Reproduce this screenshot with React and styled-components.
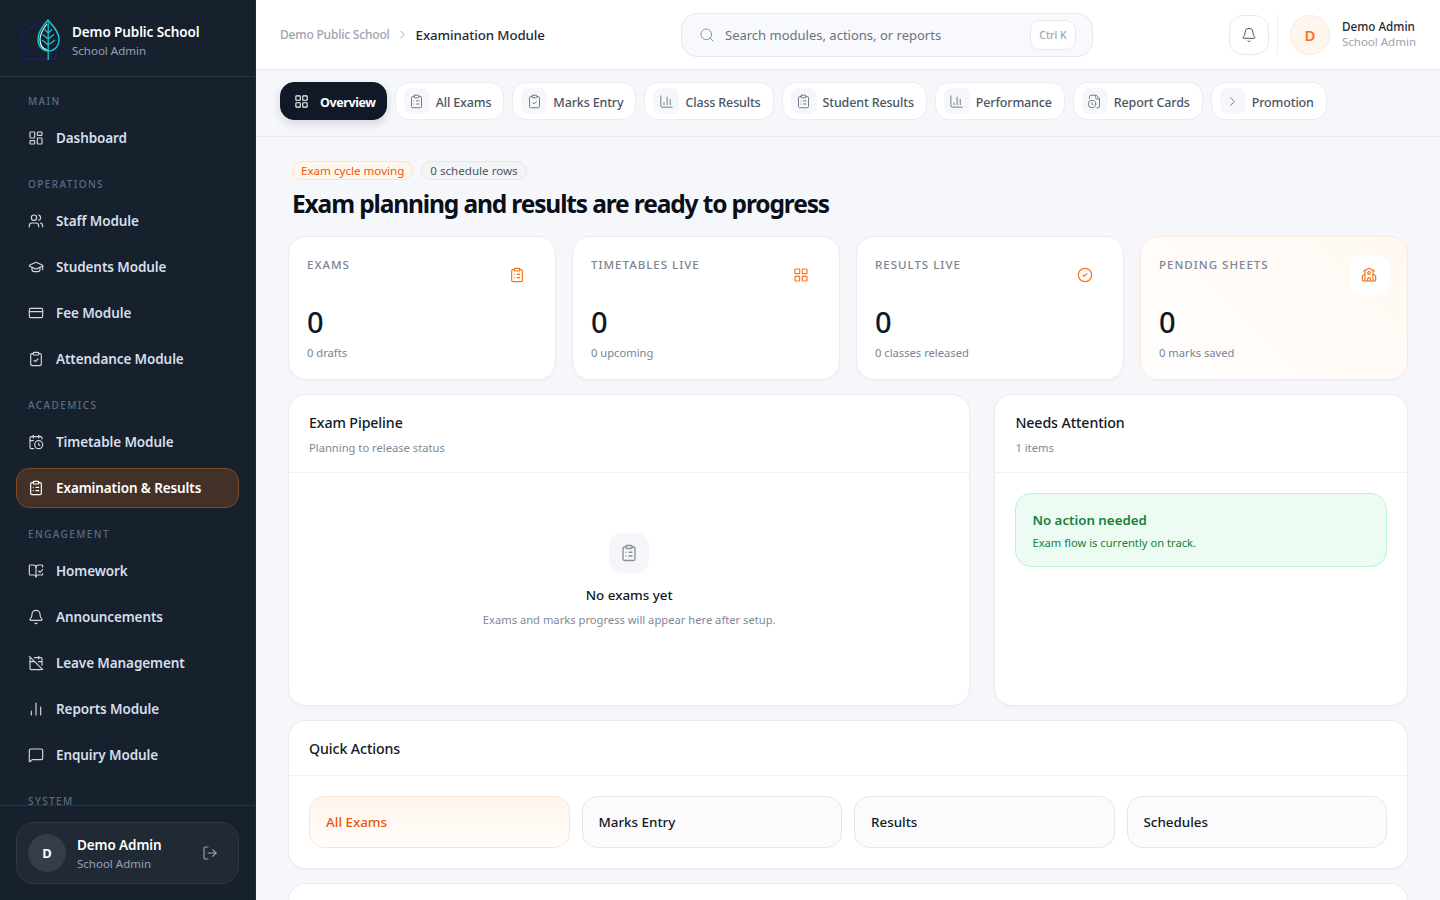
import React from 'react';
import styled, { createGlobalStyle } from 'styled-components';
import {
  LayoutDashboard, LayoutGrid, Users, GraduationCap, CreditCard, ClipboardCheck, CalendarClock, ClipboardList,
  BookOpenCheck, Bell, CalendarOff, ChartNoAxesColumn, MessageSquare, LogOut, ChevronRight, Search, ChartColumn,
  FileClock, CircleCheck, School,
} from 'lucide-react';

const Global = createGlobalStyle`
  html, body { margin: 0; padding: 0; height: 100%; overflow: hidden; }
  body { font-family: "Noto Sans", "Open Sans", sans-serif; background: #f5f7fb; color: #111827; }
  * { box-sizing: border-box; }
`;

const Shell = styled.div`display: flex; height: 100vh; overflow: hidden;`;

const Sidebar = styled.aside`
  width: 256px; flex: none; display: flex; flex-direction: column; height: 100%;
  background: #17212d; border-right: 1px solid #1f2a37;
`;
const Brand = styled.div`
  height: 77px; flex: none; display: flex; align-items: center; gap: 8px; padding: 6px 16px 0 20px;
  border-bottom: 1px solid #2a3441;
`;
const BrandText = styled.div`display: flex; flex-direction: column; gap: 2px;`;
const BrandName = styled.div`font-size: 13.5px; font-weight: 600; color: #fff; line-height: 18px; letter-spacing: -0.1px;`;
const BrandRole = styled.div`font-size: 11.5px; color: #94a3b8; line-height: 16px;`;

const Nav = styled.nav`flex: 1; min-height: 0; overflow: hidden; padding: 16px 16px 0;`;
const SectionLabel = styled.div`
  font-size: 10px; line-height: 16px; letter-spacing: 1.4px; color: #5a6b82; font-weight: 500;
  padding-left: 12px; margin: 18px 0 9px; text-transform: uppercase;
  &:first-child { margin-top: 0; margin-bottom: 9px; }
`;
const NavItem = styled.div`
  height: 40px; display: flex; align-items: center; gap: 12px; padding: 0 11px;
  margin-bottom: 6px; border-radius: 13px; font-size: 13.5px; font-weight: 600; letter-spacing: -0.1px;
  color: ${p => (p.$active ? '#fff' : '#d5deea')};
  background: ${p => (p.$active ? '#433128' : 'transparent')};
  border: 1px solid ${p => (p.$active ? '#7c4a24' : 'transparent')};
  svg { flex: none; color: ${p => (p.$active ? '#fff' : '#cdd6e2')}; }
`;

const SideFooter = styled.div`flex: none; padding: 16px; border-top: 1px solid #2a3441;`;
const UserCard = styled.div`
  height: 62px; display: flex; align-items: center; gap: 11px; padding: 0 11px;
  border-radius: 18px; background: #212934; border: 1px solid #2e3744;
`;
const UserAvatar = styled.div`
  width: 38px; height: 38px; flex: none; border-radius: 50%; background: #343d49; color: #fff;
  display: flex; align-items: center; justify-content: center; font-size: 13px; font-weight: 700;
`;
const UserText = styled.div`flex: 1; min-width: 0; padding-top: 3px;`;
const UserName = styled.div`font-size: 13.5px; font-weight: 600; line-height: 18px; color: #fff; letter-spacing: -0.1px;`;
const UserRole = styled.div`font-size: 11.5px; line-height: 18px; margin-top: 1px; color: #94a3b8;`;
const LogoutIcon = styled.div`display: flex; color: #94a3b8; margin-right: 9px;`;

const Main = styled.main`flex: 1; min-width: 0; height: 100%; overflow: hidden; display: flex; flex-direction: column;`;
const TopBar = styled.header`
  height: 70px; flex: none; background: #fff; border-bottom: 1px solid #e7eaf0;
  display: flex; align-items: center; padding: 0 24px;
`;
const Crumbs = styled.div`display: flex; align-items: center; gap: 6px; width: 401px; flex: none;`;
const CrumbRoot = styled.span`font-size: 12px; font-weight: 500; color: #9ca3af; letter-spacing: -0.2px;`;
const CrumbCurrent = styled.span`font-size: 13.3px; font-weight: 500; color: #1f2937; margin-left: 1px; letter-spacing: -0.1px;`;
const SearchBox = styled.div`
  width: 412px; height: 44px; flex: none; display: flex; align-items: center; gap: 10px;
  padding: 0 16px 0 17px; border-radius: 16px; background: #f8f9fc; border: 1px solid #e5e8ef; color: #8b93a1;
`;
const SearchText = styled.span`flex: 1; font-size: 13px; color: #6b7280;`;
const Kbd = styled.span`
  width: 46px; height: 30px; margin-right: 0; border-radius: 10px; border: 1px solid #e6e9ef; background: #fff;
  display: flex; align-items: center; justify-content: center; font-size: 10.5px; font-weight: 500; color: #9ca3af;
`;
const TopRight = styled.div`margin-left: auto; display: flex; align-items: center;`;
const BellBtn = styled.div`
  width: 40px; height: 40px; border-radius: 14px; background: #fff; border: 1px solid #e7eaf0;
  display: flex; align-items: center; justify-content: center; color: #4b5563;
`;
const VDivider = styled.div`width: 1px; height: 40px; background: #eef0f4; margin: 0 12px 0 8px;`;
const TopAvatar = styled.div`
  width: 40px; height: 40px; border-radius: 50%; background: #fff6ee; border: 1px solid #f0ece8; color: #f97316;
  display: flex; align-items: center; justify-content: center; font-size: 15px; font-weight: 600;
`;
const TopUser = styled.div`margin-left: 12px;`;
const TopName = styled.div`font-size: 11.7px; font-weight: 500; line-height: 15px; color: #1f2937;`;
const TopRole = styled.div`font-size: 11.5px; line-height: 16px; color: #9ca3af;`;

const TabBar = styled.div`
  height: 67px; flex: none; display: flex; align-items: flex-start; gap: 8px; padding: 12px 24px 0;
  border-bottom: 1px solid #e9ecf2; background: #f5f7fb;
`;
const Tab = styled.div`
  height: 38px; display: flex; align-items: center; gap: 6px; padding: ${p => (p.$active ? '0 10px 0 10px' : '0 12px 0 8px')};
  border-radius: 14px; font-size: 12.5px; font-weight: ${p => (p.$active ? 700 : 500)};
  letter-spacing: ${p => (p.$active ? '-0.4px' : '-0.15px')};
  color: ${p => (p.$active ? '#fff' : '#4b5563')};
  background: ${p => (p.$active ? '#111827' : '#fff')};
  border: 1px solid ${p => (p.$active ? '#111827' : '#e9ecf2')};
  box-shadow: ${p => (p.$active ? '0 4px 10px rgba(17,24,39,.14)' : 'none')};
`;
const TabIcon = styled.span`
  width: ${p => (p.$active ? '20px' : '26px')}; height: 26px; border-radius: 8px; display: flex; align-items: center; justify-content: center;
  color: ${p => (p.$active ? '#fff' : '#6b7280')}; background: ${p => (p.$active ? 'transparent' : '#f6f7fb')};
  margin-right: ${p => (p.$active ? '3px' : '0')};
`;
const TabLabel = styled.span`margin-top: 2px;`;

const Content = styled.div`flex: 1; min-height: 0; overflow: hidden; padding: 24px 32px; display: flex; flex-direction: column; gap: 14px;`;
const Hero = styled.div`padding-left: 4px;`;
const Badges = styled.div`display: flex; gap: 8px;`;
const Badge = styled.span`
  height: 19px; padding: 0 8px; border-radius: 10px; display: flex; align-items: center; font-size: 11.6px;
  color: ${p => (p.$warm ? '#ea580c' : '#4b5563')};
  background: ${p => (p.$warm ? '#fff6ee' : '#f3f4f6')};
  border: 1px solid ${p => (p.$warm ? '#fde3cf' : '#e5e7eb')};
`;
const Title = styled.h1`margin: 6px 0 0; font-size: 24.5px; line-height: 36px; font-weight: 700; color: #0b0f19; letter-spacing: -1.13px;`;

const Stats = styled.div`display: grid; grid-template-columns: repeat(4, 1fr); gap: 16px; flex: none;`;
const Stat = styled.div`
  height: 144px; border-radius: 18px; padding: 18px; position: relative;
  border: 1px solid ${p => (p.$warm ? '#fde9da' : '#e9ecf2')};
  background: ${p => (p.$warm ? 'linear-gradient(45deg, #fffefd 0%, #fff8f2 100%)' : '#fff')};
  box-shadow: 0 1px 3px rgba(17,24,39,.03);
`;
const StatHead = styled.div`display: flex; justify-content: space-between; align-items: flex-start; height: 40px;`;
const StatLabel = styled.div`font-size: 11.5px; line-height: 19px; font-weight: 500; letter-spacing: 1px; color: #7a8494; text-transform: uppercase;`;
const StatIcon = styled.div`
  width: 40px; height: 40px; border-radius: 13px; display: flex; align-items: center; justify-content: center;
  color: #f97316; background: ${p => (p.$warm ? '#fff' : 'transparent')};
`;
const StatValue = styled.div`font-size: 29px; line-height: 40px; font-weight: 500; color: #0f172a; margin-top: 7px;`;
const StatNote = styled.div`font-size: 11.2px; line-height: 18px; color: #7a8494; margin-top: 2px;`;

const Columns = styled.div`display: grid; grid-template-columns: 1.65fr 1fr; gap: 24px; flex: none;`;
const Panel = styled.section`
  background: #fff; border-radius: 18px; border: 1px solid #e9ecf2; box-shadow: 0 1px 3px rgba(17,24,39,.03);
  height: ${p => p.$h}; flex: none; overflow: hidden;
`;
const PanelHead = styled.div`padding: 17px 20px 0; border-bottom: 1px solid #eef0f4; height: ${p => p.$h || '78px'};`;
const PanelTitle = styled.div`font-size: 14.2px; line-height: 22px; font-weight: 500; color: #111827; letter-spacing: -0.1px;`;
const PanelSub = styled.div`font-size: 11.2px; line-height: 18px; color: #7f8896; margin-top: 5px;`;
const Empty = styled.div`display: flex; flex-direction: column; align-items: center; padding-top: 60px;`;
const EmptyIcon = styled.div`
  width: 40px; height: 40px; border-radius: 13px; background: #f5f6fa; color: #8b8f98;
  display: flex; align-items: center; justify-content: center;
`;
const EmptyTitle = styled.div`font-size: 13.4px; font-weight: 500; color: #111827; line-height: 20px; margin-top: 12px;`;
const EmptyText = styled.div`font-size: 11.2px; line-height: 18px; color: #7f8896; margin-top: 6px;`;
const PanelBody = styled.div`padding: 20px;`;
const Notice = styled.div`
  height: 74px; border-radius: 16px; background: #edfcf3; border: 1px solid #bbf2d0; padding: 16px 16px;
`;
const NoticeTitle = styled.div`font-size: 13.3px; font-weight: 600; line-height: 20px; color: #15803d;`;
const NoticeText = styled.div`font-size: 11.2px; line-height: 18px; color: #15803d; margin-top: 4px;`;
const Actions = styled.div`display: grid; grid-template-columns: repeat(4, 1fr); gap: 12px; padding: 20px;`;
const Action = styled.div`
  height: 52px; border-radius: 15px; padding: 0 16px; display: flex; align-items: center; font-size: 13.4px; font-weight: 500;
  color: ${p => (p.$warm ? '#ea580c' : '#111827')};
  background: ${p => (p.$warm ? 'linear-gradient(180deg, #fff5ec 0%, #fffdfb 100%)' : '#fbfbfc')};
  border: 1px solid ${p => (p.$warm ? '#fde3cf' : '#e5e7eb')};
`;

const Logo = () => (
  <svg width="44" height="44" viewBox="0 0 44 44" fill="none" style={{ flex: 'none' }}>
    <path d="M0.5 16 L20 2 L39 15.5 M4 13.5 V40 H36 V14" stroke="#17206b" strokeWidth="1.3" strokeLinejoin="round" />
    <path d="M28 1 C23 7 18 13 18 20 C18 28 23 32 28.5 32 C34 32 39 28 39 20 C39 13 33 7 28 1Z" fill="#17212d" stroke="#19c3cf" strokeWidth="1.5" />
    <path d="M27 5 C23 10 20 15 20 20.5 C20 26 23 30 27.5 31" stroke="#e3f9fb" strokeWidth="1.2" />
    <path d="M28.2 3 V41 M28.2 14 L24.5 10.5 M28.2 14 L32 10.5 M28.2 20 L22.5 15.5 M28.2 20 L34 15.5 M28.2 26 L22 21 M28.2 26 L35 21" stroke="#19c3cf" strokeWidth="1.3" />
  </svg>
);

const sections = [
  ['Main', [[LayoutDashboard, 'Dashboard']]],
  ['Operations', [[Users, 'Staff Module'], [GraduationCap, 'Students Module'], [CreditCard, 'Fee Module'], [ClipboardCheck, 'Attendance Module']]],
  ['Academics', [[CalendarClock, 'Timetable Module'], [ClipboardList, 'Examination & Results', true]]],
  ['Engagement', [[BookOpenCheck, 'Homework'], [Bell, 'Announcements'], [CalendarOff, 'Leave Management'], [ChartNoAxesColumn, 'Reports Module'], [MessageSquare, 'Enquiry Module']]],
  ['System', []],
];
const tabs = [
  [ClipboardList, 'All Exams'], [ClipboardCheck, 'Marks Entry'], [ChartColumn, 'Class Results'], [ClipboardList, 'Student Results'],
  [ChartColumn, 'Performance'], [FileClock, 'Report Cards'], [ChevronRight, 'Promotion'],
];
const stats = [
  ['Exams', ClipboardList, '0 drafts'], ['Timetables Live', LayoutGrid, '0 upcoming'],
  ['Results Live', CircleCheck, '0 classes released'], ['Pending Sheets', School, '0 marks saved', true],
];

export default function App() {
  return (
    <Shell>
      <Global />
      <Sidebar>
        <Brand>
          <Logo />
          <BrandText>
            <BrandName>Demo Public School</BrandName>
            <BrandRole>School Admin</BrandRole>
          </BrandText>
        </Brand>
        <Nav>
          {sections.map(([label, items]) => (
            <React.Fragment key={label}>
              <SectionLabel>{label}</SectionLabel>
              {items.map(([Icon, text, active]) => (
                <NavItem key={text} $active={active}><Icon size={16} strokeWidth={1.75} />{text}</NavItem>
              ))}
            </React.Fragment>
          ))}
        </Nav>
        <SideFooter>
          <UserCard>
            <UserAvatar>D</UserAvatar>
            <UserText>
              <UserName>Demo Admin</UserName>
              <UserRole>School Admin</UserRole>
            </UserText>
            <LogoutIcon><LogOut size={16} strokeWidth={1.75} /></LogoutIcon>
          </UserCard>
        </SideFooter>
      </Sidebar>
      <Main>
        <TopBar>
          <Crumbs>
            <CrumbRoot>Demo Public School</CrumbRoot>
            <ChevronRight size={13} color="#9ca3af" strokeWidth={1.75} />
            <CrumbCurrent>Examination Module</CrumbCurrent>
          </Crumbs>
          <SearchBox>
            <Search size={16} strokeWidth={1.5} />
            <SearchText>Search modules, actions, or reports</SearchText>
            <Kbd>Ctrl K</Kbd>
          </SearchBox>
          <TopRight>
            <BellBtn><Bell size={16} strokeWidth={1.5} /></BellBtn>
            <VDivider />
            <TopAvatar>D</TopAvatar>
            <TopUser>
              <TopName>Demo Admin</TopName>
              <TopRole>School Admin</TopRole>
            </TopUser>
          </TopRight>
        </TopBar>
        <TabBar>
          <Tab $active><TabIcon $active><LayoutGrid size={15} strokeWidth={1.75} /></TabIcon><TabLabel>Overview</TabLabel></Tab>
          {tabs.map(([Icon, text]) => (
            <Tab key={text}><TabIcon><Icon size={15} strokeWidth={1.5} /></TabIcon><TabLabel>{text}</TabLabel></Tab>
          ))}
        </TabBar>
        <Content>
          <Hero>
            <Badges>
              <Badge $warm>Exam cycle moving</Badge>
              <Badge>0 schedule rows</Badge>
            </Badges>
            <Title>Exam planning and results are ready to progress</Title>
          </Hero>
          <Stats>
            {stats.map(([label, Icon, note, warm]) => (
              <Stat key={label} $warm={warm}>
                <StatHead>
                  <StatLabel>{label}</StatLabel>
                  <StatIcon $warm={warm}><Icon size={16} strokeWidth={1.75} /></StatIcon>
                </StatHead>
                <StatValue>0</StatValue>
                <StatNote>{note}</StatNote>
              </Stat>
            ))}
          </Stats>
          <Columns>
            <Panel $h="312px">
              <PanelHead>
                <PanelTitle>Exam Pipeline</PanelTitle>
                <PanelSub>Planning to release status</PanelSub>
              </PanelHead>
              <Empty>
                <EmptyIcon><ClipboardList size={18} strokeWidth={1.75} /></EmptyIcon>
                <EmptyTitle>No exams yet</EmptyTitle>
                <EmptyText>Exams and marks progress will appear here after setup.</EmptyText>
              </Empty>
            </Panel>
            <Panel $h="312px">
              <PanelHead>
                <PanelTitle>Needs Attention</PanelTitle>
                <PanelSub>1 items</PanelSub>
              </PanelHead>
              <PanelBody>
                <Notice>
                  <NoticeTitle>No action needed</NoticeTitle>
                  <NoticeText>Exam flow is currently on track.</NoticeText>
                </Notice>
              </PanelBody>
            </Panel>
          </Columns>
          <Panel $h="149px">
            <PanelHead $h="55px">
              <PanelTitle>Quick Actions</PanelTitle>
            </PanelHead>
            <Actions>
              <Action $warm>All Exams</Action>
              <Action>Marks Entry</Action>
              <Action>Results</Action>
              <Action>Schedules</Action>
            </Actions>
          </Panel>
          <Panel $h="120px" />
        </Content>
      </Main>
    </Shell>
  );
}
